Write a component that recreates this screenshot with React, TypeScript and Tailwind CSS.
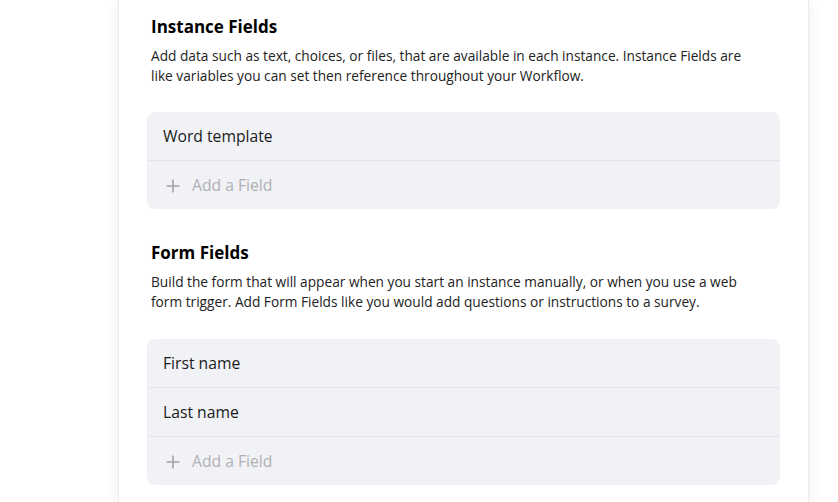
import React from "react";

function PlusIcon() {
  return (
    <svg width="14" height="14" viewBox="0 0 14 14" className="shrink-0">
      <path d="M7 0.5V13.5M0.5 7H13.5" stroke="#a3a3a3" strokeWidth="1.6" />
    </svg>
  );
}

function FieldBox({ items }: { items: string[] }) {
  return (
    <div className="rounded-lg bg-[#f1f2f6] overflow-hidden">
      {items.map((it) => (
        <div key={it} className="h-[49px] pt-[2px] flex items-center px-4 border-b border-[#e4e5ea] text-[15.7px] text-[#1a1a1a]">
          {it}
        </div>
      ))}
      <div className="h-[48px] pt-[2px] flex items-center px-4 gap-3 text-[15.7px] text-[#b0b0b4]">
        <span className="pl-[3px] flex items-center"><PlusIcon /></span>
        <span>Add a Field</span>
      </div>
    </div>
  );
}

export default function App() {
  return (
    <div className="w-[838px] h-[502px] bg-white overflow-hidden" style={{ fontFamily: '"Open Sans", "Noto Sans", sans-serif' }}>
      <div className="ml-[118px] w-[691px] h-full bg-white shadow-[0_0_14px_rgba(0,0,0,0.07)] border-x border-[#ececec] px-[28px] pt-[13px]">
        <h2 className="px-1 text-[17px] leading-[28px] font-bold text-black">Instance Fields</h2>
        <p className="px-1 max-w-[608px] mt-[5px] text-[13.7px] leading-[20px] text-[#222]">
          Add data such as text, choices, or files, that are available in each instance. Instance Fields are like variables you can set then reference throughout your Workflow.
        </p>
        <div className="mt-[26px]">
          <FieldBox items={["Word template"]} />
        </div>
        <h2 className="mt-[30px] px-1 text-[17px] leading-[28px] font-bold text-black">Form Fields</h2>
        <p className="px-1 max-w-[608px] mt-[5px] text-[13.7px] leading-[20px] text-[#222]">
          Build the form that will appear when you start an instance manually, or when you use a web form trigger. Add Form Fields like you would add questions or instructions to a survey.
        </p>
        <div className="mt-[27px]">
          <FieldBox items={["First name", "Last name"]} />
        </div>
      </div>
    </div>
  );
}
